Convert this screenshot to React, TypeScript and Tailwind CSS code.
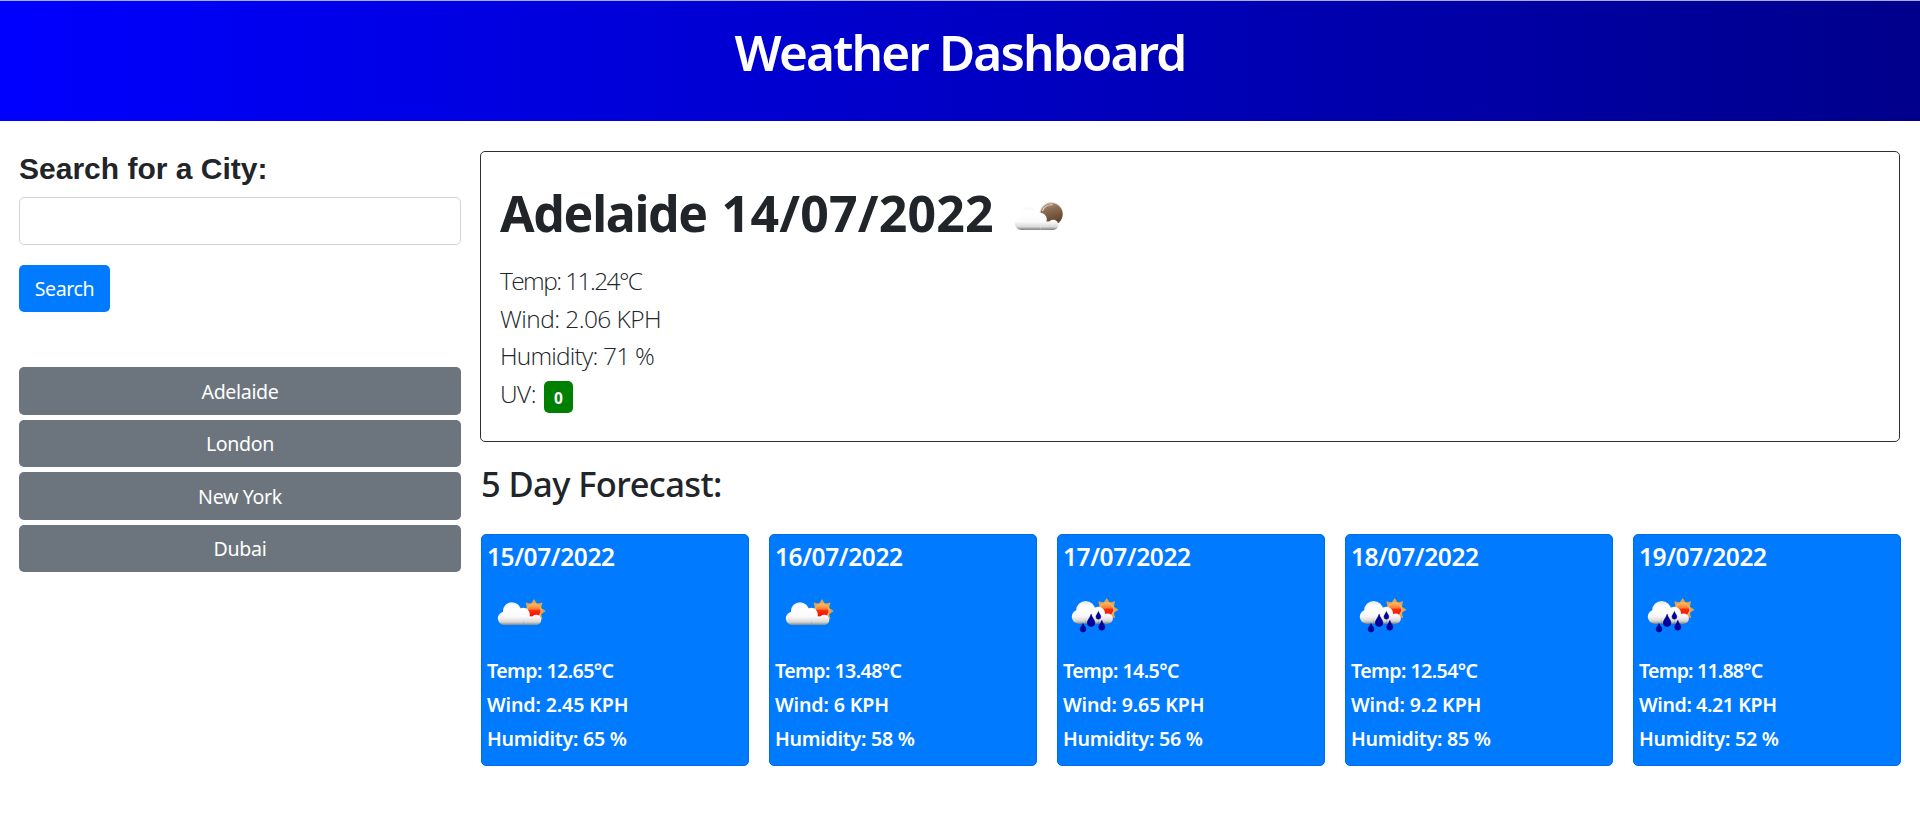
type Sky = "sun" | "rain" | "moon";

const SUNNY_CLOUD = [
  [24, 30.2, 9],
  [16.4, 37.3, 6.6],
  [35.2, 33.4, 6.6],
  [48.2, 38.8, 5.1],
];
const RAINY_CLOUD = [
  [21.7, 29.5, 9.6],
  [14.8, 35.7, 7],
  [34.3, 32.5, 6.8],
  [43.8, 37.6, 5.1],
];

function sunRays(cx: number, cy: number) {
  const points: string[] = [];
  for (let i = 0; i < 16; i++) {
    const r = i % 2 === 0 ? 11.8 : 7.8;
    const a = (i * Math.PI) / 8 - Math.PI / 2;
    points.push(`${(cx + r * Math.cos(a)).toFixed(2)},${(cy + r * Math.sin(a)).toFixed(2)}`);
  }
  return points.join(" ");
}

function drop(x: number, top: number, bottom: number, w: number) {
  const r = w / 2;
  const c = bottom - r;
  return `M${x} ${top} C${x + r * 0.3} ${top + r} ${x + r} ${c - r * 0.7} ${x + r} ${c} A${r} ${r} 0 0 1 ${x - r} ${c} C${x - r} ${c - r * 0.7} ${x - r * 0.3} ${top + r} ${x} ${top} Z`;
}

function WeatherIcon({ sky, id }: { sky: Sky; id: string }) {
  const rainy = sky === "rain";
  const cx = rainy ? 42.7 : 46;
  const cy = rainy ? 28.7 : 29.9;
  const puffs = rainy ? RAINY_CLOUD : SUNNY_CLOUD;
  const base = rainy ? 42.7 : 43.9;
  const left = puffs[1][0];
  const peak = puffs[0][0];
  const shoulder = puffs[2][0];
  const right = puffs[3][0];
  return (
    <svg className="block size-16 shrink-0" viewBox="0 0 64 64" aria-hidden="true">
      <defs>
        <linearGradient id={`${id}-cloud`} gradientUnits="userSpaceOnUse" x1="0" y1="20.5" x2="0" y2={base}>
          <stop offset="0" stopColor={sky === "moon" ? "#f3f3f3" : "#e3e8ef"} />
          <stop offset="0.2" stopColor="#ffffff" />
          <stop offset="0.65" stopColor="#fafafa" />
          <stop offset="0.87" stopColor="#d8d8d8" />
          <stop offset="1" stopColor={sky === "moon" ? "#777777" : "#8e8e8e"} />
        </linearGradient>
        <linearGradient id={`${id}-sun`} x1="0" y1="0" x2="0" y2="1">
          <stop offset="0" stopColor="#ffb65e" />
          <stop offset="0.35" stopColor="#ff7e35" />
          <stop offset="0.48" stopColor="#fb2a0a" />
          <stop offset="1" stopColor="#ff0800" />
        </linearGradient>
        <linearGradient id={`${id}-moon`} x1="0" y1="0" x2="0.3" y2="1">
          <stop offset="0" stopColor="#b39a86" />
          <stop offset="0.4" stopColor="#8a6a50" />
          <stop offset="1" stopColor="#5f4029" />
        </linearGradient>
      </defs>
      {sky === "moon" ? (
        <>
          <circle cx="46.3" cy="28" r="11.7" fill="#d8cabf" />
          <circle cx="46.6" cy="28.3" r="11" fill={`url(#${id}-moon)`} />
          <path d="M37.5 25 A9.8 9.8 0 0 1 47.5 18.8" fill="none" stroke="#e6dad1" strokeWidth="1.2" />
        </>
      ) : (
        <>
          <polygon points={sunRays(cx, cy)} fill="#dca552" />
          <circle cx={cx} cy={cy} r="7.8" fill="#f3b45c" />
          <circle cx={cx} cy={cy} r="6.5" fill={`url(#${id}-sun)`} />
        </>
      )}
      <g fill={`url(#${id}-cloud)`}>
        <rect x={left} y="34.5" width={peak - left} height={base - 34.5} />
        <rect x={peak} y="31" width={shoulder - peak} height={base - 31} />
        <rect x={shoulder} y="35.5" width={right - shoulder} height={base - 35.5} />
        {puffs.map(([x, y, r]) => (
          <circle key={x} cx={x} cy={y} r={r} />
        ))}
      </g>
      {rainy && (
        <g fill="#0000a4" stroke="#00006a" strokeWidth="0.6">
          <path d={drop(19, 42.6, 51, 5.8)} />
          <path d={drop(27.1, 33.2, 45.6, 7.6)} />
          <path d={drop(34.4, 30.6, 38.2, 4.8)} />
          <path d={drop(37.8, 39.4, 49.2, 6.2)} />
        </g>
      )}
    </svg>
  );
}

const CITIES = ["Adelaide", "London", "New York", "Dubai"];

const FORECAST: {
  date: string;
  sky: Sky;
  temp: string;
  wind: string;
  humidity: string;
  tempTracking: string;
  windTracking: string;
}[] = [
  { date: "15/07/2022", sky: "sun", temp: "12.65", wind: "2.45", humidity: "65", tempTracking: "tracking-[-0.57px]", windTracking: "tracking-[-0.13px]" },
  { date: "16/07/2022", sky: "sun", temp: "13.48", wind: "6", humidity: "58", tempTracking: "tracking-[-0.57px]", windTracking: "tracking-[-0.13px]" },
  { date: "17/07/2022", sky: "rain", temp: "14.5", wind: "9.65", humidity: "56", tempTracking: "tracking-[-0.57px]", windTracking: "tracking-[-0.13px]" },
  { date: "18/07/2022", sky: "rain", temp: "12.54", wind: "9.2", humidity: "85", tempTracking: "tracking-[-0.57px]", windTracking: "tracking-[-0.13px]" },
  { date: "19/07/2022", sky: "rain", temp: "11.88", wind: "4.21", humidity: "52", tempTracking: "tracking-[-0.8px]", windTracking: "tracking-[-0.4px]" },
];

export default function App() {
  return (
    <div className="min-h-[828px] w-full bg-white font-['Noto_Sans','Open_Sans',sans-serif] text-[#212529]">
      <header className="h-[121px] border-t border-[#a9a9f5] bg-linear-to-r/srgb from-[#0000ff] to-[#00008b] pt-[21px] text-center">
        <h1 className="text-[49.5px] leading-[60px] font-semibold tracking-[-1.85px] text-white">
          Weather Dashboard
        </h1>
      </header>

      <div className="flex pt-[30px]">
        <aside className="ml-[19px] w-[442px] shrink-0">
          <h3 className="mb-[10px] font-['Liberation_Sans',Arial,sans-serif] text-[30px] leading-9 font-bold">
            Search for a City:
          </h3>
          <input
            type="text"
            aria-label="City"
            className="mb-5 block h-[47.5px] w-full rounded-[5px] border border-[#ced4da] bg-white px-4 text-[20px] outline-none"
          />
          <button className="block h-[47.5px] w-[91px] rounded-[5px] bg-[#007bff] text-[19.6px] tracking-[-0.4px] text-white">
            Search
          </button>
          <div className="mt-[55px] flex flex-col gap-[5px]">
            {CITIES.map((city) => (
              <button
                key={city}
                className="h-[47.5px] rounded-[5px] bg-[#6c757d] pt-px text-[19.6px] tracking-[-0.35px] text-white"
              >
                {city}
              </button>
            ))}
          </div>
        </aside>

        <main className="ml-[19px] w-[1421px]">
          <section className="h-[291px] w-[1420px] rounded-[5px] border border-[#2b3035] pt-[31px] pl-[19px]">
            <div className="mb-[19px] flex h-[60px]">
              <h2 className="w-[505px] text-[50px] leading-[60px] font-bold whitespace-nowrap">
                <span className="mr-[3px] tracking-[-1.3px]">Adelaide </span>
                <span className="tracking-[0.2px]">14/07/2022</span>
              </h2>
              <div className="mt-[3px]">
                <WeatherIcon sky="moon" id="today" />
              </div>
            </div>
            <div className="font-['Open_Sans',sans-serif] text-[24.5px] leading-[37.5px] font-light">
              <p className="tracking-[-1.6px]">Temp: 11.24°C</p>
              <p className="tracking-[-0.57px]">Wind: 2.06 KPH</p>
              <p className="tracking-[-0.8px]">Humidity: 71 %</p>
              <p className="flex h-[37.5px]">
                <span className="w-11 tracking-[-0.5px]">UV:</span>
                <span className="mt-[6.5px] flex h-8 w-[29px] items-center justify-center rounded-[5px] bg-[#008000] pt-[2px] font-['Noto_Sans',sans-serif] text-[15.5px] leading-5 font-bold text-white">
                  0
                </span>
              </p>
            </div>
          </section>

          <h2 className="mt-[21px] mb-[29px] ml-[1px] text-[34.5px] leading-[42px] font-medium tracking-[-0.6px]">
            5 Day Forecast:
          </h2>

          <div className="ml-px grid grid-cols-5 gap-5">
            {FORECAST.map((day, i) => (
              <article
                key={day.date}
                className="h-[232px] rounded-[5px] border border-[#006ee6] bg-[#007bff] pt-[7px] pl-[5px] font-semibold text-white"
              >
                <h3 className="text-[24.5px] leading-[30px] tracking-[-0.4px]">{day.date}</h3>
                <div className="mt-[9px] mb-[8.5px] ml-px">
                  <WeatherIcon sky={day.sky} id={`day-${i}`} />
                </div>
                <div className="text-[19.6px] leading-[34px]">
                  <p className={day.tempTracking}>Temp: {day.temp}°C</p>
                  <p className={day.windTracking}>Wind: {day.wind} KPH</p>
                  <p className="tracking-[-0.27px]">Humidity: {day.humidity} %</p>
                </div>
              </article>
            ))}
          </div>
        </main>
      </div>
    </div>
  );
}
